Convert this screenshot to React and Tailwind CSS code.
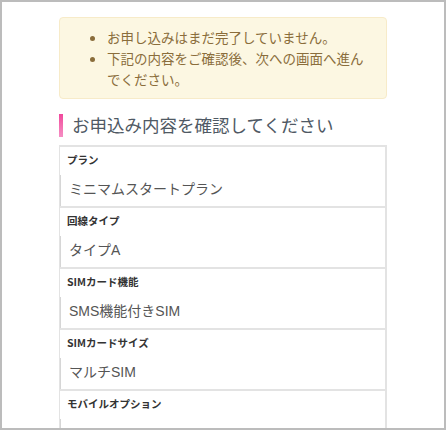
export default function App() {
  const rows = [
    ["プラン", "ミニマムスタートプラン"],
    ["回線タイプ", "タイプA"],
    ["SIMカード機能", "SMS機能付きSIM"],
    ["SIMカードサイズ", "マルチSIM"],
    ["モバイルオプション", ""],
  ];
  return (
    <div
      className="h-[430px] w-[446px] overflow-hidden border-2 border-[#bcbcbc] bg-white"
      style={{ fontFamily: '"Noto Sans CJK JP", "Noto Sans", sans-serif' }}
    >
      <div className="mx-auto w-[328px] pt-[15px]">
        <div className="rounded-[4px] border border-[#f7ebc9] bg-[#fcf7e2] pl-[15px] pr-[10px] pt-[9px] pb-[8px] text-[13.5px] leading-[21px] text-[#8a6d3b]">
          <ul className="list-disc pl-[32px]">
            <li>お申し込みはまだ完了していません。</li>
            <li>下記の内容をご確認後、次への画面へ進んでください。</li>
          </ul>
        </div>
        <div className="mt-[14px] flex items-center">
          <div className="h-[23px] w-[4px] bg-gradient-to-b from-[#f0469c] to-[#f58ec4]" />
          <h2 className="ml-[9px] text-[17.5px] leading-[24px] text-[#4f5964]">
            お申込み内容を確認してください
          </h2>
        </div>
        <div className="mt-[8px] border-t-2 border-r-2 border-l border-[#e3e3e3]">
          {rows.map(([label, value]) => (
            <div key={label} className="border-b-2 border-[#e3e3e3]">
              <div className="h-[28px] pl-[7px] pt-[5px] text-[10.5px] font-bold leading-[16px] text-[#333]">
                {label}
              </div>
              <div
                className="h-[31px] border-l border-[#d6d6d6] pl-[8px] text-[14px] leading-[28px] text-[#555]"
                style={{ fontFamily: '"Liberation Sans", "Noto Sans CJK JP", sans-serif' }}
              >
                {value}
              </div>
            </div>
          ))}
        </div>
      </div>
    </div>
  );
}
